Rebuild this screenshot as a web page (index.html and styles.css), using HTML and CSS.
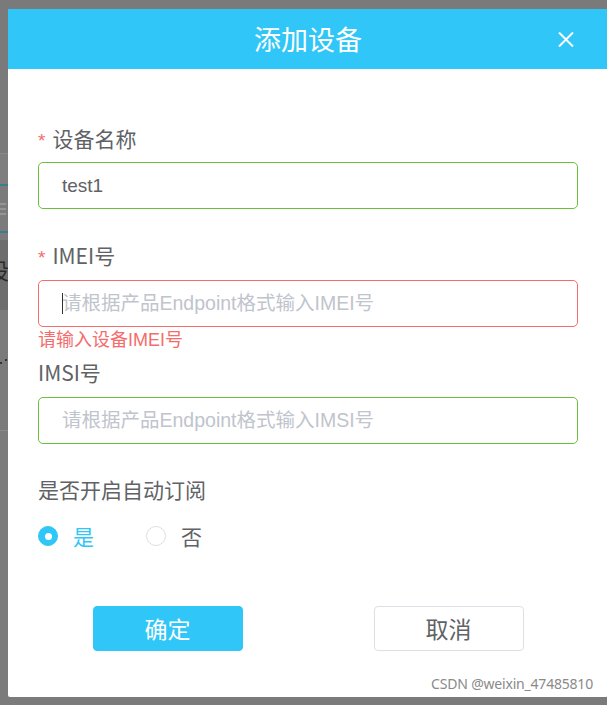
FILE: index.html
```html
<!DOCTYPE html>
<html lang="zh-CN">
<head>
<meta charset="utf-8">
<title>添加设备</title>
<link rel="stylesheet" href="styles.css">
</head>
<body>
<div class="page">
  <div class="pg-block pg-top"></div>
  <div class="pg-line pg-faint"></div>
  <div class="pg-block pg-h30"></div>
  <div class="pg-line pg-teal"></div>
  <div class="pg-block pg-menu"><span class="pg-burger"></span></div>
  <div class="pg-line pg-teal"></div>
  <div class="pg-block pg-h7"></div>
  <div class="pg-block pg-dark"><span class="pg-glyph">设</span></div>
  <div class="pg-block pg-mid"><span class="pg-marks"></span></div>
  <div class="pg-line pg-faint"></div>
  <div class="pg-block pg-rest"></div>
</div>

<div class="dialog">
  <div class="dialog-header">
    <span class="dialog-title">添加设备</span>
    <button class="dialog-close" type="button" aria-label="关闭">
      <svg width="16" height="15" viewBox="0 0 16 15"><path d="M1 0.5 L15 14.5 M15 0.5 L1 14.5" stroke="#fff" stroke-width="2" fill="none"/></svg>
    </button>
  </div>

  <div class="dialog-body">
    <div class="form-item">
      <div class="form-label"><span class="req">*</span>设备名称</div>
      <div class="input-wrap">
        <input class="input is-success" type="text" value="test1">
      </div>
    </div>

    <div class="form-item">
      <div class="form-label"><span class="req">*</span>IMEI号</div>
      <div class="input-wrap">
        <input class="input is-error" type="text" placeholder="请根据产品Endpoint格式输入IMEI号">
        <span class="caret"></span>
        <div class="form-error">请输入设备IMEI号</div>
      </div>
    </div>

    <div class="form-item">
      <div class="form-label">IMSI号</div>
      <div class="input-wrap">
        <input class="input is-success" type="text" placeholder="请根据产品Endpoint格式输入IMSI号">
      </div>
    </div>

    <div class="form-item">
      <div class="form-label">是否开启自动订阅</div>
      <div class="radio-group">
        <label class="radio is-checked"><span class="radio-inner"></span><span class="radio-label">是</span></label>
        <label class="radio"><span class="radio-inner"></span><span class="radio-label">否</span></label>
      </div>
    </div>
  </div>

  <div class="dialog-footer">
    <button class="btn btn-primary" type="button">确定</button>
    <button class="btn btn-default" type="button">取消</button>
  </div>

  <div class="watermark">CSDN @weixin_47485810</div>
</div>
</body>
</html>
```

FILE: styles.css
```css
* { box-sizing: border-box; }

html, body {
  margin: 0;
  padding: 0;
  width: 607px;
  height: 705px;
  overflow: hidden;
  background: #7b7b7b;
  font-family: "Liberation Sans", "Noto Sans CJK SC", sans-serif;
}

/* underlying page seen through the mask */
.page {
  display: flex;
  flex-direction: column;
  width: 607px;
}
.pg-block { background: #7b7b7b; position: relative; overflow: hidden; }
.pg-top { height: 153px; background: #7a7a7a; }
.pg-line { height: 1px; }
.pg-faint { background: #8a8a8a; }
.pg-teal { height: 2px; background: #3b7d8e; }
.pg-h30 { height: 30px; background: #7e7e7e; }
.pg-menu { height: 45px; }
.pg-h7 { height: 7px; }
.pg-dark { height: 70px; background: #6d6d6d; }
.pg-mid { height: 120px; }
.pg-rest { height: 270px; }

.pg-burger {
  display: block;
  width: 6px;
  height: 2px;
  margin-top: 17px;
  background: #959595;
  box-shadow: 0 5px 0 #959595, 0 10px 0 #959595;
}
.pg-glyph {
  display: block;
  margin-left: -13px;
  margin-top: 18px;
  color: #2a2a2a;
  font-family: "Noto Sans CJK SC", sans-serif;
  font-size: 22px;
  line-height: 22px;
}
.pg-marks {
  display: block;
  width: 2px;
  height: 2px;
  margin-top: 52px;
  margin-left: 0;
  background: #333;
  box-shadow: 5px -3px 0 #333;
}

/* dialog */
.dialog {
  position: absolute;
  left: 8px;
  top: 9px;
  width: 600px;
  height: 688px;
  background: #fff;
  border-radius: 2px;
  display: flex;
  flex-direction: column;
}

.dialog-header {
  position: relative;
  height: 60px;
  background: #30c6f8;
  display: flex;
  align-items: center;
  justify-content: center;
}
.dialog-title {
  color: #fff;
  font-family: "Noto Sans CJK SC", sans-serif;
  font-size: 27px;
  line-height: 30px;
}
.dialog-close {
  position: absolute;
  right: 34px;
  top: 23px;
  width: 16px;
  height: 15px;
  padding: 0;
  border: 0;
  background: transparent;
  display: flex;
}

.dialog-body {
  padding: 54px 30px 0;
  display: flex;
  flex-direction: column;
}

.form-item { margin-bottom: 30px; }

.form-label {
  height: 30px;
  line-height: 30px;
  margin-bottom: 9px;
  font-family: "Noto Sans CJK SC", sans-serif;
  font-size: 21px;
  color: #606266;
}
.form-item + .form-item .form-label { margin-bottom: 10px; }
.form-item:nth-child(2) { margin-top: 1px; }
.req {
  color: #f56c6c;
  margin-right: 7px;
  font-family: "Liberation Sans", sans-serif;
  font-size: 19px;
}

.input-wrap { position: relative; }
.input {
  display: block;
  width: 100%;
  height: 47px;
  padding: 0 23px;
  border: 1px solid #dcdfe6;
  border-radius: 5px;
  background: #fff;
  outline: none;
  font-family: "Liberation Sans", "Noto Sans CJK SC", sans-serif;
  font-size: 19px;
  color: #606266;
}
.input::placeholder { color: #c0c4cc; font-size: 19.5px; }
.is-success { border-color: #67c23a; }
.is-error { border-color: #f56c6c; }

.caret {
  position: absolute;
  left: 24px;
  top: 13px;
  width: 1px;
  height: 21px;
  background: #303133;
}

.form-error {
  position: absolute;
  left: 0;
  top: calc(100% + 3px);
  line-height: 20px;
  font-family: "Liberation Sans", "Noto Sans CJK SC", sans-serif;
  font-size: 18px;
  color: #f56c6c;
}

.radio-group {
  height: 44px;
  display: flex;
  align-items: center;
}
.radio {
  display: flex;
  align-items: center;
  margin-right: 52px;
  cursor: pointer;
}
.radio-inner {
  width: 20px;
  height: 20px;
  border-radius: 50%;
  border: 1px solid #dcdfe6;
  background: #fff;
  display: flex;
  align-items: center;
  justify-content: center;
}
.radio.is-checked .radio-inner {
  border-color: #30c6f8;
  background: #30c6f8;
}
.radio.is-checked .radio-inner::after {
  content: "";
  width: 7px;
  height: 7px;
  border-radius: 50%;
  background: #fff;
}
.radio-label {
  margin-left: 15px;
  font-family: "Noto Sans CJK SC", sans-serif;
  font-size: 21px;
  line-height: 24px;
  color: #606266;
}
.radio.is-checked .radio-label { color: #30c6f8; }

.dialog-footer {
  margin-top: 18px;
  display: flex;
  justify-content: center;
  gap: 131px;
}
.btn {
  width: 150px;
  height: 45px;
  border-radius: 4px;
  font-family: "Noto Sans CJK SC", sans-serif;
  font-size: 23px;
  line-height: 1;
  padding: 0;
  cursor: pointer;
}
.btn-primary {
  background: #30c6f8;
  border: 1px solid #30c6f8;
  color: #fff;
}
.btn-default {
  background: #fff;
  border: 1px solid #dcdfe6;
  color: #606266;
}

.watermark {
  position: absolute;
  right: 15px;
  bottom: 4px;
  font-family: "Noto Sans", sans-serif;
  font-size: 14px;
  color: #8a8a8a;
  letter-spacing: -0.2px;
}
```
